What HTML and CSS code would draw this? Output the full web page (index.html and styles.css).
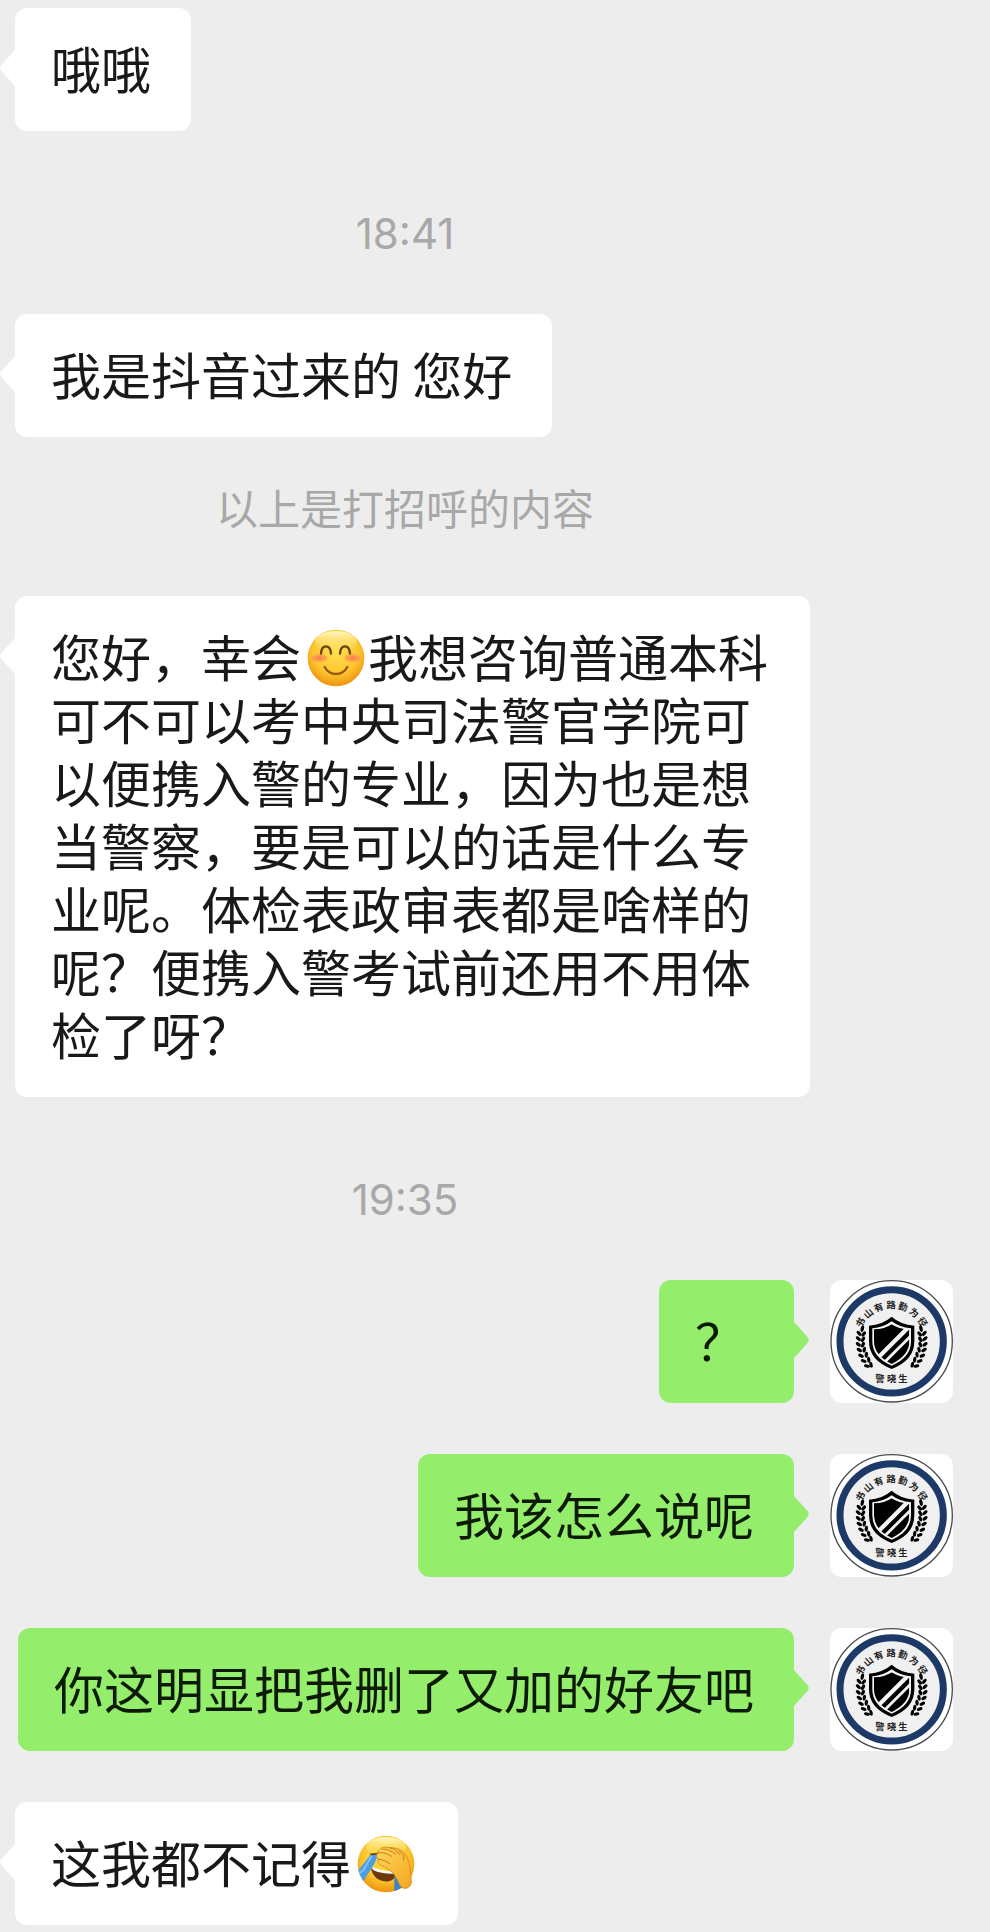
FILE: index.html
```html
<!DOCTYPE html>
<html lang="zh-CN">
<head>
    <meta charset="UTF-8">
    <meta name="viewport" content="width=device-width, initial-scale=1.0">
    <title>聊天</title>
    <link rel="stylesheet" href="styles.css">
</head>
<body>
    <!-- shared drawings -->
    <svg class="defs" aria-hidden="true">
        <defs>
            <radialGradient id="face" cx="50%" cy="38%" r="62%">
                <stop offset="0" stop-color="#ffe04f"/>
                <stop offset="0.65" stop-color="#fdc52f"/>
                <stop offset="1" stop-color="#ee930c"/>
            </radialGradient>
            <linearGradient id="shine" x1="0" y1="0" x2="0" y2="1">
                <stop offset="0" stop-color="#fff8c4"/>
                <stop offset="1" stop-color="#ffe35c" stop-opacity="0"/>
            </linearGradient>
            <linearGradient id="hand" x1="0" y1="0" x2="1" y2="1">
                <stop offset="0" stop-color="#ffd75a"/>
                <stop offset="1" stop-color="#f5a623"/>
            </linearGradient>
            <radialGradient id="blush">
                <stop offset="0" stop-color="#f9744f" stop-opacity="0.95"/>
                <stop offset="1" stop-color="#fb9a55" stop-opacity="0.55"/>
            </radialGradient>
            <clipPath id="faceClip"><circle cx="87" cy="87" r="85"/></clipPath>
            <clipPath id="shieldClip"><path d="M185 133 Q206 148 238 148 V184 Q238 226 185 252 Q132 226 132 184 V148 Q164 148 185 133Z"/></clipPath>
            <g id="leaves">
                <ellipse cx="97" cy="146" rx="5" ry="10" transform="rotate(12 97 146)"/>
                <ellipse cx="87" cy="160" rx="5" ry="9" transform="rotate(-38 87 160)"/>
                <ellipse cx="101" cy="162" rx="5" ry="9" transform="rotate(40 101 162)"/>
                <ellipse cx="85" cy="176" rx="5" ry="9" transform="rotate(-46 85 176)"/>
                <ellipse cx="99" cy="178" rx="5" ry="9" transform="rotate(32 99 178)"/>
                <ellipse cx="85" cy="193" rx="5" ry="9" transform="rotate(-52 85 193)"/>
                <ellipse cx="99" cy="194" rx="5" ry="9" transform="rotate(22 99 194)"/>
                <ellipse cx="88" cy="210" rx="5" ry="9" transform="rotate(-60 88 210)"/>
                <ellipse cx="103" cy="209" rx="5" ry="9" transform="rotate(12 103 209)"/>
                <ellipse cx="93" cy="227" rx="5" ry="9" transform="rotate(-66 93 227)"/>
                <ellipse cx="109" cy="224" rx="5" ry="9" transform="rotate(4 109 224)"/>
                <ellipse cx="101" cy="243" rx="5" ry="9" transform="rotate(-72 101 243)"/>
                <ellipse cx="116" cy="239" rx="5" ry="9" transform="rotate(-6 116 239)"/>
                <ellipse cx="111" cy="258" rx="5" ry="9" transform="rotate(-76 111 258)"/>
                <ellipse cx="123" cy="254" rx="5" ry="9" transform="rotate(-14 123 254)"/>
            </g>
            <symbol id="badge" viewBox="0 0 369 369">
                <circle cx="185" cy="184" r="182" fill="#fff" stroke="#4a4d50" stroke-width="4"/>
                <circle cx="185" cy="184" r="155" fill="#f0f0f0" stroke="#1c3968" stroke-width="21"/>
                <g class="badge-text">
                    <text x="185" y="85" transform="rotate(-59 185 184)">书</text>
                    <text x="185" y="85" transform="rotate(-40 185 184)">山</text>
                    <text x="185" y="85" transform="rotate(-21 185 184)">有</text>
                    <text x="185" y="85" transform="rotate(-1 185 184)">路</text>
                    <text x="185" y="85" transform="rotate(18 185 184)">勤</text>
                    <text x="185" y="85" transform="rotate(38 185 184)">为</text>
                    <text x="185" y="85" transform="rotate(58 185 184)">径</text>
                    <text x="150" y="306">警</text>
                    <text x="185" y="306">晓</text>
                    <text x="219" y="306">生</text>
                </g>
                <use href="#leaves"/>
                <use href="#leaves" transform="translate(370 0) scale(-1 1)"/>
                <path d="M185 110 Q212 134 253 137 V184 Q253 241 185 267 Q117 241 117 184 V137 Q158 134 185 110Z"/>
                <path fill="#f4f4f4" d="M185 124 Q209 142 243 145 V184 Q243 233 185 257 Q127 233 127 184 V145 Q161 142 185 124Z"/>
                <g clip-path="url(#shieldClip)">
                    <path d="M120 120 H248 L120 248Z"/>
                    <path d="M250 136 L120 266 V284 L250 154Z"/>
                    <path d="M250 166 L150 266 H250Z"/>
                </g>
            </symbol>
        </defs>
    </svg>

    <main class="chat">
        <div class="message received">
            <p class="bubble">哦哦</p>
        </div>

        <time class="time" datetime="18:41">18:41</time>

        <div class="message received">
            <p class="bubble">我是抖音过来的 您好</p>
        </div>

        <p class="notice">以上是打招呼的内容</p>

        <div class="message received">
            <p class="bubble">您好，幸会<svg class="emoji" viewBox="0 0 174 174" role="img" aria-label="微笑">
                <circle cx="87" cy="87" r="85" fill="url(#face)"/>
                <ellipse cx="87" cy="40" rx="62" ry="34" fill="url(#shine)"/>
                <ellipse cx="37" cy="87" rx="25" ry="12" fill="url(#blush)"/>
                <ellipse cx="137" cy="87" rx="25" ry="12" fill="url(#blush)"/>
                <g fill="none" stroke="#6b4412" stroke-width="7" stroke-linecap="round">
                    <path d="M42 74 C44 45 70 45 72 74"/>
                    <path d="M99 74 C101 45 127 45 129 74"/>
                    <path d="M53 114 C68 142 106 142 121 114" stroke="#985914"/>
                </g>
            </svg>我想咨询普通本科可不可以考中央司法警官学院可以便携入警的专业，因为也是想当警察，要是可以的话是什么专业呢。体检表政审表都是啥样的呢？便携入警考试前还用不用体检了呀？</p>
        </div>

        <time class="time" datetime="19:35">19:35</time>

        <div class="message sent">
            <p class="bubble">？</p>
            <svg class="avatar" role="img" aria-label="警晓生"><use href="#badge"/></svg>
        </div>

        <div class="message sent">
            <p class="bubble">我该怎么说呢</p>
            <svg class="avatar" role="img" aria-label="警晓生"><use href="#badge"/></svg>
        </div>

        <div class="message sent">
            <p class="bubble">你这明显把我删了又加的好友吧</p>
            <svg class="avatar" role="img" aria-label="警晓生"><use href="#badge"/></svg>
        </div>

        <div class="message received">
            <p class="bubble">这我都不记得<svg class="emoji" viewBox="0 0 174 174" role="img" aria-label="捂脸">
                <circle cx="87" cy="87" r="85" fill="url(#face)"/>
                <ellipse cx="87" cy="36" rx="60" ry="30" fill="url(#shine)"/>
                <path d="M42 100 C62 112 90 116 116 112 C116 132 104 142 82 139 C60 136 46 122 42 100Z" fill="#6d3a0e"/>
                <path d="M46 95 C66 105 90 110 115 108 L114 116 C90 117 66 114 48 105Z" fill="#fff"/>
                <g clip-path="url(#faceClip)">
                    <path d="M42 58 L62 58 C60 72 54 84 46 96 L18 140 L-4 116 Z" fill="#4a9fe2"/>
                    <path d="M44 62 L20 104 L4 118" fill="none" stroke="#7cc2f2" stroke-width="6"/>
                    <path d="M112 122 L132 146 L140 174 H112Z" fill="#3b82c9"/>
                </g>
                <path d="M42 58 L61 56" stroke="#6b4412" stroke-width="5" stroke-linecap="round"/>
                <path d="M62 53 C66 38 82 34 96 38 C116 38 136 42 146 60 C160 80 160 110 163 140 C162 156 150 163 136 158 C124 150 124 134 114 122 C106 106 84 98 68 88 C60 84 60 78 66 74 C58 70 58 60 62 53Z" fill="url(#hand)" stroke="#dc8d18" stroke-width="3"/>
                <path d="M63 54 C78 50 90 56 104 64 M76 42 C92 42 104 48 116 58 M64 73 C76 72 88 80 98 86 M98 38 C112 42 122 48 128 58 M126 48 C140 56 142 66 140 76" fill="none" stroke="#c67b14" stroke-width="3" stroke-linecap="round"/>
            </svg></p>
        </div>
    </main>
</body>
</html>
```
FILE: styles.css
```css
* {
    box-sizing: border-box;
}

body {
    margin: 0;
    background-color: #ededed;
    color: #191919;
    font-family: "Noto Sans CJK SC", sans-serif;
}

.defs {
    position: absolute;
    width: 0;
    height: 0;
}

.chat {
    display: flex;
    flex-direction: column;
    gap: 51px;
    padding: 8px 0;
}

.message {
    display: flex;
    align-items: flex-start;
}

.received {
    padding: 0 180px 0 15px;
}

.sent {
    justify-content: flex-end;
    gap: 36px;
    padding-right: 37px;
}

.bubble {
    position: relative;
    min-width: 135px;
    margin: 0;
    padding: 28px 40px 32px 36px;
    border-radius: 12px;
    background-color: #fff;
    font-size: 50px;
    line-height: 63px;
}

.sent .bubble {
    background-color: #95ee6b;
    color: #0d1a06;
}

/* bubble tail */
.bubble::before {
    content: "";
    position: absolute;
    top: 42px;
    right: 100%;
    width: 15px;
    height: 36px;
    background-color: inherit;
    clip-path: polygon(100% 0, 10% 42%, 0 50%, 10% 58%, 100% 100%);
}

.sent .bubble::before {
    right: auto;
    left: 100%;
    clip-path: polygon(0 0, 90% 42%, 100% 50%, 90% 58%, 0 100%);
}

.time, .notice {
    margin: 0 180px 0 0;
    color: #a8a8a8;
    font-size: 42px;
    text-align: center;
}

.time {
    padding: 31px 0 8px;
    font-family: Inter, sans-serif;
    line-height: 42px;
}

.notice {
    padding-bottom: 19px;
    line-height: 38px;
}

.emoji {
    width: 58px;
    height: 58px;
    margin: 5px 3px 0 6px;
    vertical-align: top;
}

.avatar {
    flex: none;
    width: 123px;
    height: 123px;
    border-radius: 12px;
    background-color: #fff;
}

.badge-text {
    font-size: 28px;
    font-weight: 700;
    fill: #222;
    text-anchor: middle;
}
```
